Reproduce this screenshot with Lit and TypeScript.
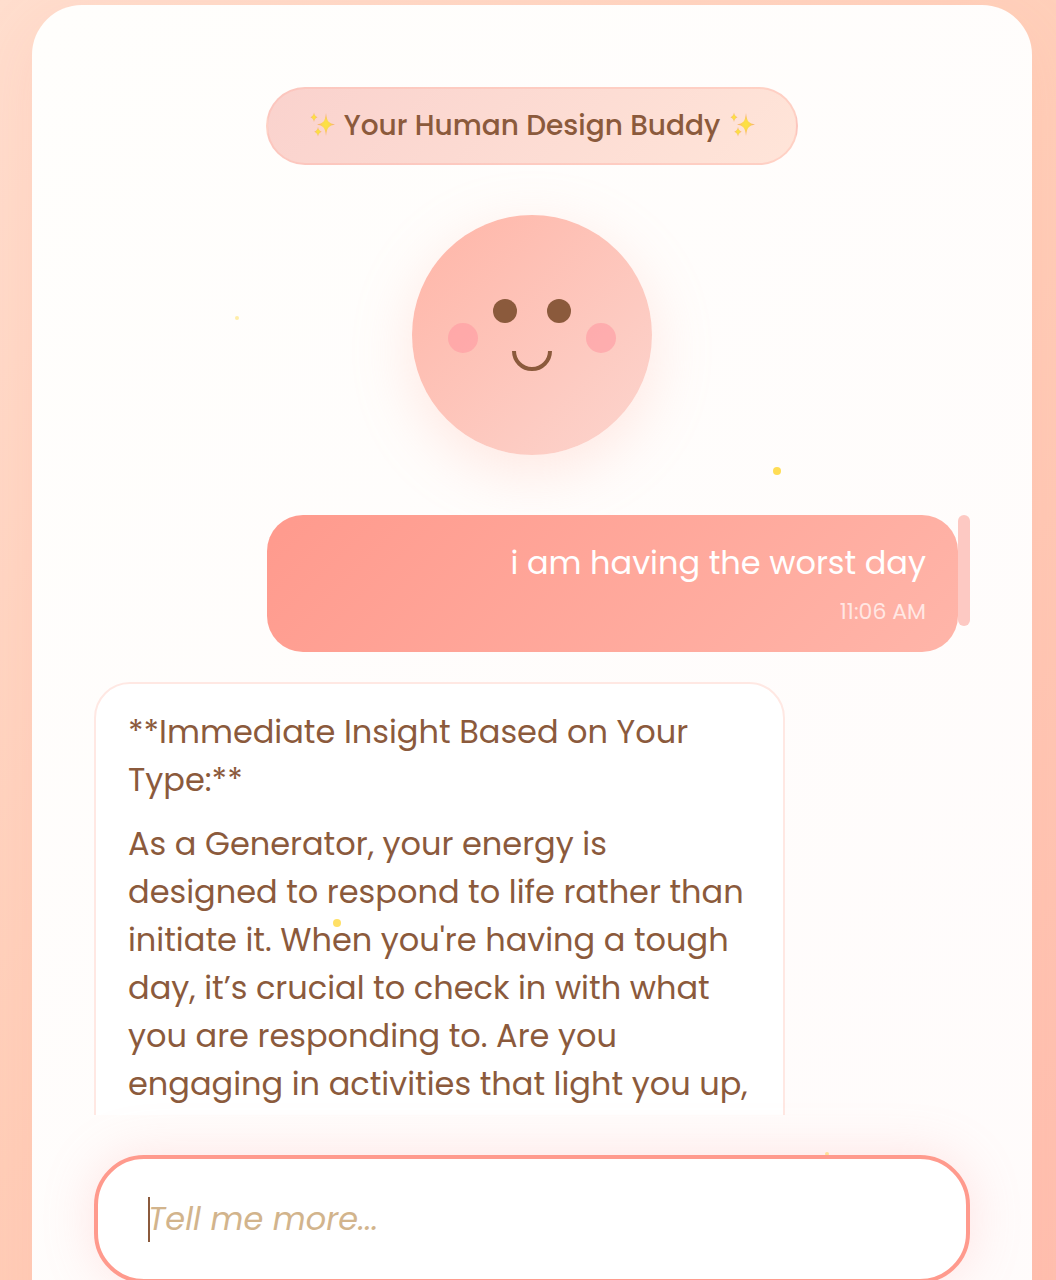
import { LitElement, css, html } from "lit";
import { customElement } from "lit/decorators.js";

interface Sparkle {
  left: number;
  top: number;
  size: number;
  opacity: number;
}

// Positions are fractions of the stage width and height, in percent.
const SPARKLES: Sparkle[] = [
  { left: 20.3, top: 24.3, size: 4, opacity: 0.5 },
  { left: 74.1, top: 36.1, size: 8, opacity: 1 },
  { left: 30.1, top: 71.4, size: 8, opacity: 0.9 },
  { left: 79.3, top: 89.6, size: 4, opacity: 0.6 },
];

@customElement("sparkle-icon")
export class SparkleIcon extends LitElement {
  static styles = css`
    :host {
      display: block;
      flex: none;
    }
    .icon {
      display: block;
      width: 28px;
      height: 28px;
    }
  `;

  render() {
    return html`
      <svg class="icon" viewBox="0 0 28 28" aria-hidden="true">
        <defs>
          <radialGradient id="glow">
            <stop offset="0" stop-color="#fde53c"></stop>
            <stop offset="0.4" stop-color="#fbd94f"></stop>
            <stop offset="1" stop-color="#f7a577"></stop>
          </radialGradient>
        </defs>
        <g fill="url(#glow)">
          <path d="M18 1Q18.800 8.500 21 10Q22.500 11.700 27 12.500Q22.500 13.300 21 15Q18.800 16.500 18 24Q17.200 16.500 15 15Q13.500 13.300 9 12.500Q13.500 11.700 15 10Q17.200 8.500 18 1Z"></path>
          <path d="M6 0.500Q6.700 4.300 9.500 5.200Q6.700 6.100 6 10Q5.300 6.100 2.500 5.200Q5.300 4.300 6 0.500Z"></path>
          <path d="M10 15Q10.700 18.800 13.700 19.700Q10.700 20.600 10 24.500Q9.300 20.600 6.300 19.700Q9.300 18.800 10 15Z"></path>
        </g>
      </svg>
    `;
  }
}

@customElement("buddy-face")
export class BuddyFace extends LitElement {
  static styles = css`
    :host {
      display: block;
    }
    .face {
      display: block;
      width: 240px;
      height: 240px;
      border-radius: 50%;
      background: linear-gradient(135deg, #ffb5a7 0%, #fcd5ce 100%);
      box-shadow: 0 16px 60px rgba(255, 181, 167, 0.3);
    }
  `;

  render() {
    return html`
      <svg class="face" viewBox="0 0 240 240" role="img" aria-label="Smiling buddy">
        <circle cx="51" cy="123" r="15" fill="#ff9aa2" fill-opacity="0.6"></circle>
        <circle cx="189" cy="123" r="15" fill="#ff9aa2" fill-opacity="0.6"></circle>
        <circle cx="93" cy="96" r="12" fill="#8b5a3c"></circle>
        <circle cx="147" cy="96" r="12" fill="#8b5a3c"></circle>
        <path d="M102 136a18 18 0 0 0 36 0" fill="none" stroke="#8b5a3c" stroke-width="4"></path>
      </svg>
    `;
  }
}

@customElement("app-root")
export class AppRoot extends LitElement {
  static styles = css`
    :host {
      display: block;
      box-sizing: border-box;
      height: 100vh;
      overflow: hidden;
      padding: 5px 24px 0 32px;
      background: linear-gradient(135deg, #ffdece 0%, #ffceb8 50%, #ffbfaf 100%);
      color: #8b5a3c;
      font-family: Poppins, Inter, "Liberation Sans", sans-serif;
      font-size: 32px;
      line-height: 48px;
    }
    * {
      box-sizing: border-box;
    }
    .card {
      position: relative;
      display: flex;
      flex-direction: column;
      align-items: center;
      max-width: 1000px;
      min-height: 120vh;
      margin: 0 auto;
      padding: 82px 62px 62px;
      border-radius: 50px;
      background: linear-gradient(135deg, #fffefc 0%, #fffbfb 100%);
      box-shadow: 0 20px 60px rgba(255, 154, 139, 0.15);
    }
    .title {
      display: flex;
      align-items: center;
      gap: 8px;
      margin: 0 0 50px;
      padding: 16px 40px;
      border: 2px solid rgba(255, 181, 167, 0.4);
      border-radius: 40px;
      background: linear-gradient(135deg, #fad2cd 0%, #ffe5d9 100%);
      font-size: 28px;
      font-weight: 500;
      line-height: 42px;
      white-space: nowrap;
    }
    .chat {
      display: flex;
      align-self: stretch;
      height: 600px;
      margin: 60px 0 40px;
      overflow: hidden;
    }
    .log {
      flex: 1;
      display: flex;
      flex-direction: column;
      gap: 30px;
      min-width: 0;
    }
    .track {
      flex: none;
      width: 12px;
    }
    .thumb {
      height: 111px;
      border-radius: 6px;
      background: #fdc9c3;
    }
    .bubble {
      flex: none;
      width: 80%;
      padding: 24px 32px;
      border-radius: 36px;
    }
    .mine {
      align-self: flex-end;
      background: linear-gradient(135deg, #ff9a8d 0%, #ffb5a9 100%);
      color: #ffffff;
      text-align: right;
    }
    .theirs {
      min-height: 600px;
      border: 2px solid #ffe8e3;
      background: #ffffff;
    }
    .line {
      margin: 0;
    }
    .line + .line {
      margin-top: 16px;
    }
    .time {
      display: block;
      margin-top: 8px;
      font-size: 22px;
      line-height: 33px;
      opacity: 0.7;
    }
    .prompt {
      display: flex;
      align-items: center;
      align-self: stretch;
      height: 128px;
      padding: 0 50px;
      border: 4px solid #ff9a8d;
      border-radius: 50px;
      background: #ffffff;
      box-shadow: 0 0 50px rgba(255, 154, 155, 0.25);
      z-index: 1;
    }
    .caret {
      flex: none;
      width: 2px;
      height: 45px;
      margin-right: -2px;
      background: #8b5a3c;
    }
    .field {
      flex: 1;
      min-width: 0;
      padding: 0;
      border: 0;
      outline: 0;
      background: none;
      color: #8b5a3c;
      font: inherit;
    }
    .field::placeholder {
      color: #d2b48c;
      font-style: italic;
      opacity: 1;
    }
    .stage {
      position: absolute;
      inset: 0 0 auto;
      height: 100vh;
      pointer-events: none;
    }
    .dot {
      position: absolute;
      border-radius: 50%;
      background: #ffdd55;
    }
  `;

  private renderSparkle(s: Sparkle) {
    return html`<span
      class="dot"
      style="left:${s.left}%;top:${s.top}%;width:${s.size}px;height:${s.size}px;opacity:${s.opacity}"
    ></span>`;
  }

  render() {
    return html`
      <main class="card">
        <h1 class="title">
          <sparkle-icon></sparkle-icon>
          <span>Your Human Design Buddy</span>
          <sparkle-icon></sparkle-icon>
        </h1>
        <buddy-face></buddy-face>
        <section class="chat" aria-label="Conversation">
          <div class="log">
            <article class="bubble mine">
              <p class="line">i am having the worst day</p>
              <time class="time" datetime="11:06">11:06 AM</time>
            </article>
            <article class="bubble theirs">
              <p class="line">**Immediate Insight Based on Your Type:**</p>
              <p class="line">
                As a Generator, your energy is designed to respond to life rather than initiate it. When
                you're having a tough day, it’s crucial to check in with what you are responding to. Are
                you engaging in activities that light you up,
              </p>
            </article>
          </div>
          <div class="track"><div class="thumb"></div></div>
        </section>
        <label class="prompt">
          <span class="caret"></span>
          <input class="field" type="text" placeholder="Tell me more..." aria-label="Tell me more" />
        </label>
        <div class="stage" aria-hidden="true">${SPARKLES.map((s) => this.renderSparkle(s))}</div>
      </main>
    `;
  }
}
